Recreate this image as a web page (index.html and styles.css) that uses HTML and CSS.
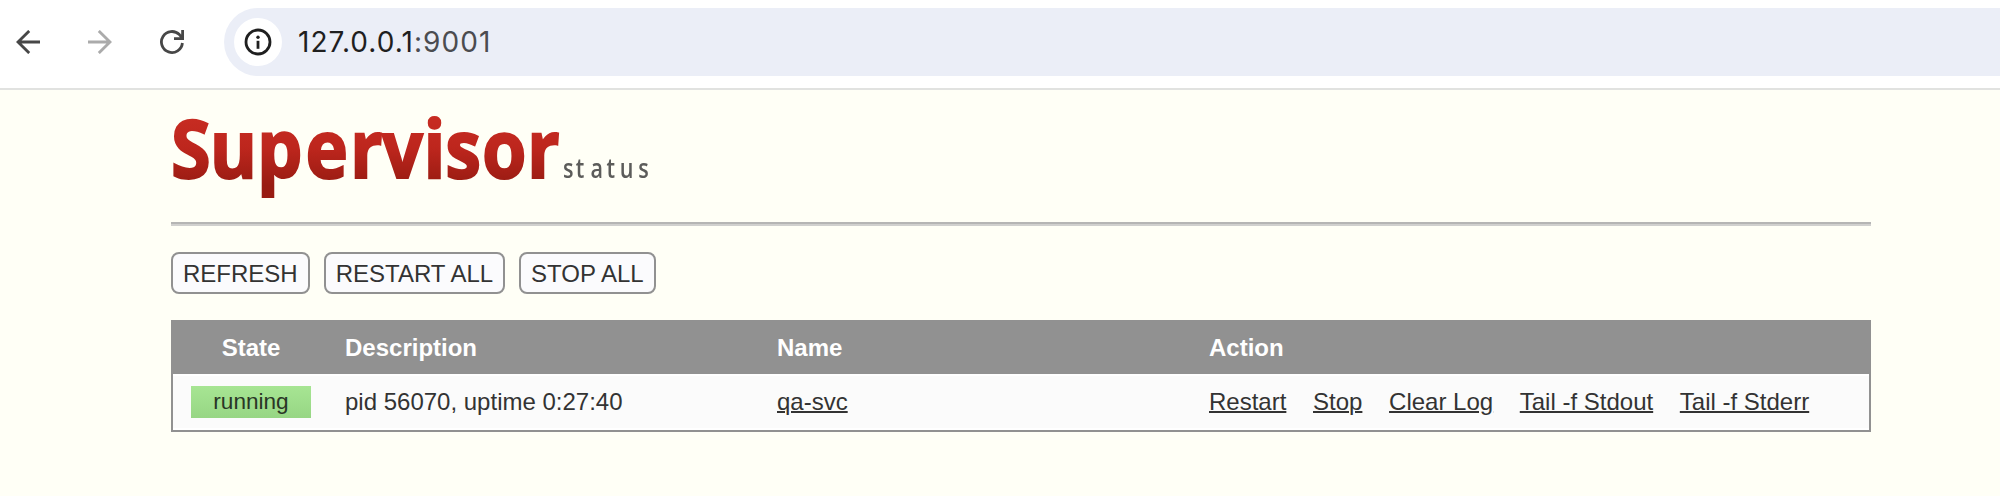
FILE: index.html
```html
<!DOCTYPE html>
<html lang="en">
<head>
<meta charset="utf-8">
<title>Supervisor Status</title>
<link rel="stylesheet" href="styles.css">
</head>
<body>
<header class="toolbar">
  <nav class="nav">
    <svg width="24" height="24" viewBox="0 0 24 24" fill="none" stroke="#474747" stroke-width="2.8"><path d="M24 12H2M13.2 .9L2 12l11.2 11.1"/></svg>
    <svg width="24" height="24" viewBox="0 0 24 24" fill="none" stroke="#ababab" stroke-width="2.8"><path d="M0 12h22M10.8 .9L22 12 10.8 23.1"/></svg>
    <svg width="24" height="24" viewBox="0 0 24 24" fill="none" stroke="#474747" stroke-width="2.8"><path d="M22.4 13A10.5 10.5 0 1 1 19.4 4.6L22.2 7.8M22.6 0V8.6H14"/></svg>
  </nav>
  <div class="omnibox">
    <span class="site-info"><svg width="28" height="28" viewBox="0 0 28 28"><circle cx="14" cy="14" r="12" fill="none" stroke="#1f1f1f" stroke-width="2.8"/><circle cx="14" cy="9.2" r="1.7" fill="#1f1f1f"/><path d="M14 12.8v8" stroke="#1f1f1f" stroke-width="2.8"/></svg></span>
    <span class="url">127.0.0.1<span class="port">:9001</span></span>
  </div>
</header>
<main class="page">
  <svg class="logo" width="490" height="132" viewBox="0 0 490 132" role="img" aria-label="Supervisor status">
    <defs><linearGradient id="red" gradientUnits="userSpaceOnUse" x1="0" y1="-60" x2="0" y2="8"><stop offset="0" stop-color="#c72c22"/><stop offset=".45" stop-color="#bd261d"/><stop offset="1" stop-color="#981b12"/></linearGradient></defs>
    <text class="brand" transform="translate(0 87.5) scale(.9 1)" x="0 43 95.6 149.5 199 234.4 280.6 304.6 345.6 395.6" fill="url(#red)" stroke="url(#red)">Supervisor</text>
    <text class="tag" transform="translate(392 88) scale(.8 1)" x="0 16 34.5 54.5 71 94">status</text>
  </svg>
  <div class="rule"></div>
  <div class="buttons">
    <a class="button">REFRESH</a>
    <a class="button">RESTART ALL</a>
    <a class="button">STOP ALL</a>
  </div>
  <section class="table">
    <div class="row head"><span class="state">State</span><span>Description</span><span>Name</span><span>Action</span></div>
    <div class="row body">
      <span class="badge">running</span>
      <span>pid 56070, uptime 0:27:40</span>
      <span><a class="link">qa-svc</a></span>
      <span class="actions"><a class="link">Restart</a><a class="link">Stop</a><a class="link">Clear Log</a><a class="link">Tail -f Stdout</a><a class="link">Tail -f Stderr</a></span>
    </div>
  </section>
</main>
</body>
</html>
```
FILE: styles.css
```css
* { box-sizing: border-box; }
body {
  margin: 0;
  height: 496px;
  overflow: hidden;
  background: #fffff6;
  color: #333;
  font: 24px/28px "Liberation Sans", Arial, sans-serif;
}
.toolbar {
  display: flex;
  height: 90px;
  padding: 8px 0 12px 16px;
  background: #fff;
  border-bottom: 2px solid #e1e2e0;
}
.nav {
  display: flex;
  align-items: center;
  gap: 48px;
  width: 208px;
}
.omnibox {
  display: flex;
  flex: 1;
  align-items: center;
  gap: 16px;
  height: 68px;
  padding-left: 10px;
  border-radius: 34px 0 0 34px;
  background: #ebeef7;
}
.site-info {
  display: flex;
  align-items: center;
  justify-content: center;
  width: 48px;
  height: 48px;
  border-radius: 50%;
  background: #fff;
}
.url {
  font: 28px/34px Inter, sans-serif;
  letter-spacing: 1.05px;
  color: #1f1f1f;
}
.port { color: #4b4c50; }
.page {
  width: 1700px;
  margin-left: 171px;
}
.logo {
  display: block;
  filter: blur(.6px);
}
.brand {
  font: bold 80px "Open Sans", sans-serif;
  stroke-width: 2px;
}
.tag {
  font: 600 27px "Open Sans", sans-serif;
  fill: #5c5c5a;
}
.rule {
  height: 4px;
  background: linear-gradient(#b5b5b4 50%, #d0d0ce 50%);
}
.buttons {
  display: flex;
  gap: 14px;
  padding: 26px 0;
}
.button {
  height: 42px;
  padding: 6px 10px 4px;
  border: 2px solid #919191;
  border-radius: 8px;
  background: #fbfbfd;
}
.table {
  height: 112px;
  border: 2px solid #919191;
  background: #fbfbfb;
}
.row {
  display: grid;
  grid-template-columns: 120px 398px 398px 1fr;
  column-gap: 34px;
  align-items: center;
  padding-left: 18px;
}
.head {
  height: 52px;
  background: #919191;
  color: #fff;
  font-weight: bold;
}
.state { text-align: center; }
.body {
  height: 56px;
  border: solid #fff;
  border-width: 2px 0;
}
.badge {
  height: 32px;
  font-size: 22.6px;
  line-height: 32px;
  text-align: center;
  color: #2a3626;
  background: linear-gradient(#a7e593, #97d684);
}
.actions {
  display: flex;
  gap: 26.67px;
}
.link {
  text-decoration: underline;
  text-decoration-thickness: 2px;
}
```
